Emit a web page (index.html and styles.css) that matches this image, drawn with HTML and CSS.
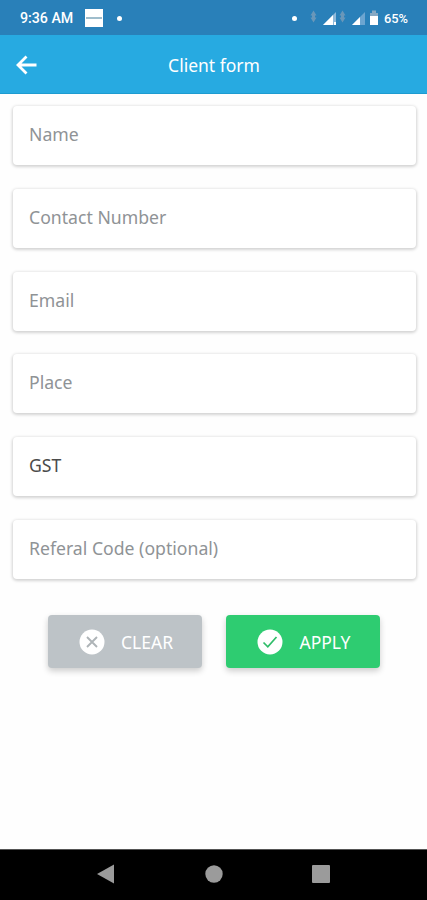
FILE: index.html
```html
<!DOCTYPE html>
<html lang="en">
<head>
<meta charset="utf-8">
<title>Client form</title>
<link rel="stylesheet" href="styles.css">
</head>
<body>
<div class="screen">
  <div class="status">
    <span class="time">9:36 AM</span>
    <span class="notice"></span>
    <span class="dot"></span>
    <span class="spacer"></span>
    <span class="dot"></span>
    <svg class="signals" width="70" height="20" viewBox="0 0 70 20">
      <g fill="#7f9fb9" opacity=".75"><path d="M2.500 7.500l3-5 3 5zM2.500 9.500h6l-3 5zM4 7h3v3H4zM31.500 7.500l3-5 3 5zM31.500 9.500h6l-3 5zM33 7h3v3h-3z"/></g>
      <path d="M28 4v13H15z" fill="#8fb9da"/>
      <path d="M25 7v10H15zM26 14h2v3h-2z" fill="#fff"/>
      <path d="M57 4v13H44z" fill="#6ca5d0"/>
      <path d="M52 9v8h-8z" fill="#fff"/>
      <path d="M62 5h2V2.500h4V5h2v5h-8z" fill="#86a9c4"/>
      <path d="M62 8h8.500v9H62z" fill="#fff"/>
    </svg>
    <span class="percent">65%</span>
  </div>
  <header class="bar">
    <svg class="back" width="22" height="20" viewBox="0 0 22 20" fill="none" stroke="#fff" stroke-width="2.800"><path d="M10.500 1.500L2 10l8.500 8.500M2 10h18.500"/></svg>
    <h1 class="title">Client form</h1>
  </header>
  <main class="form">
    <div class="field">Name</div>
    <div class="field">Contact Number</div>
    <div class="field">Email</div>
    <div class="field">Place</div>
    <div class="field filled">GST</div>
    <div class="field">Referal Code (optional)</div>
    <div class="actions">
      <div class="button clear">
        <svg width="26" height="26" viewBox="0 0 26 26"><circle cx="13" cy="13" r="12.500" fill="#fff"/><path d="M8 8l10 10M18 8L8 18" stroke="#aeb4b7" stroke-width="1.900"/></svg>
        <span>CLEAR</span>
      </div>
      <div class="button apply">
        <svg width="26" height="26" viewBox="0 0 26 26"><circle cx="13" cy="13" r="12.500" fill="#fff"/><path d="M6.500 13.500l4.300 4.300L19.500 8" fill="none" stroke="#2fbd69" stroke-width="1.700"/></svg>
        <span>APPLY</span>
      </div>
    </div>
  </main>
  <nav class="nav">
    <svg width="20" height="20" viewBox="0 0 20 20"><path d="M1 10L18 .5v19z" fill="#9b9b9b"/></svg>
    <svg width="20" height="20" viewBox="0 0 20 20"><circle cx="10" cy="10" r="8.700" fill="#9b9b9b"/></svg>
    <svg width="20" height="20" viewBox="0 0 20 20"><rect x="1" y="1" width="18" height="18" rx="1" fill="#9b9b9b"/></svg>
  </nav>
</div>
</body>
</html>
```
FILE: styles.css
```css
* { box-sizing: border-box; }
body { margin: 0; background: #fefefe; font-family: "Noto Sans", "Open Sans", sans-serif; }
.screen { width: 427px; height: 900px; display: flex; flex-direction: column; overflow: hidden; }
.status {
  height: 35px; background: #2980b9; display: flex; align-items: center;
  padding: 1px 18px 0 20px; color: #fff; font-family: Roboto, sans-serif; font-weight: 500;
}
.time { font-size: 14.200px; width: 65px; white-space: nowrap; }
.notice {
  width: 18px; height: 18px; margin-right: 1px;
  background: linear-gradient(#9fbdcc, #9fbdcc) center / 16px 2px no-repeat #fff;
}
.dot { width: 5px; height: 5px; border-radius: 50%; background: #fff; margin-left: 13px; }
.spacer { flex: 1; }
.signals { margin: 0 6px 0 11px; }
.percent { font-size: 12.800px; width: 25px; }
.bar {
  height: 59px; background: #27aae1; border-bottom: 1px solid #1d9bd0;
  display: flex; align-items: center; padding: 1px 16px 0; color: #fff;
}
.title { margin: 0; flex: 1; text-align: center; font-size: 17.5px; font-weight: 400; padding: 1px 21px 0 0; }
.form { flex: 1; padding: 12px 11px 0 13px; display: flex; flex-direction: column; gap: 23.800px; }
.field {
  height: 59px; background: #fff; border-radius: 4px; padding: 0 16px 3px; display: flex; align-items: center;
  color: #8f9396; font-size: 17.650px; box-shadow: 0 1px 3px 1px rgba(0, 0, 0, .17);
}
.filled { color: #4b4b4b; }
.actions { display: flex; gap: 24px; padding: 12px 0 0 35px; }
.button {
  width: 154px; height: 53px; border-radius: 4px; display: flex; align-items: center;
  gap: 16px; padding: 2px 0 0 31px; color: #fff; font-size: 17.5px; box-shadow: 0 3px 6px rgba(0, 0, 0, .2);
}
.apply { padding-left: 30.5px; }
.apply span { padding-left: 1px; }
.clear { background: #bdc3c7; }
.apply { background: #2ecc71; }
.nav {
  height: 51px; background: #000; border-top: 1px solid #555; display: flex;
  justify-content: space-between; align-items: center; padding: 0 96px 2px;
}
```
